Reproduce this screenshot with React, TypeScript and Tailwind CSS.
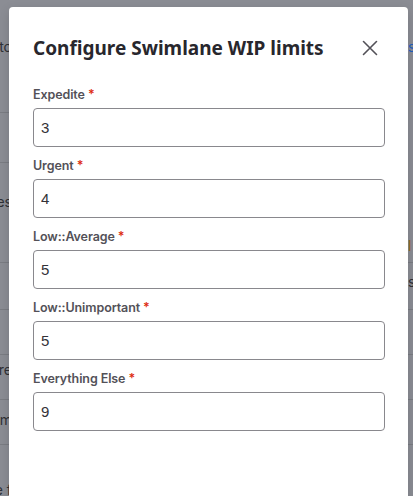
import React from "react";

const fields = [
  { label: "Expedite", value: "3" },
  { label: "Urgent", value: "4" },
  { label: "Low::Average", value: "5" },
  { label: "Low::Unimportant", value: "5" },
  { label: "Everything Else", value: "9" },
];

export default function App() {
  return (
    <div className="relative w-[413px] h-[496px] overflow-hidden bg-[#8b8d94] flex justify-between" style={{ fontFamily: "Inter, 'Noto Sans', sans-serif" }}>
      {/* background page (dimmed) */}
      <div className="w-[12px] overflow-hidden flex flex-col text-[14px] text-[#2f3036] whitespace-nowrap">
        <div className="h-[113px] border-b border-[#7a7c83] flex items-start justify-end pt-[36px]">to</div>
        <div className="h-[50px] border-b border-[#7a7c83]" />
        <div className="h-[100px] border-b border-[#7a7c83] flex items-start justify-end pt-[28px]">es</div>
        <div className="h-[47px] border-b border-[#7a7c83]" />
        <div className="h-[45px] border-b border-[#7a7c83]" />
        <div className="h-[45px] border-b border-[#7a7c83] flex items-start justify-end pt-[4px]">ere</div>
        <div className="h-[45px] border-b border-[#7a7c83] flex items-start justify-end pt-[9px]">m</div>
        <div className="flex-1 flex items-end justify-end leading-[12px]">e f</div>
      </div>
      <div className="w-[5px] overflow-hidden flex flex-col text-[14px] text-[#2f3036] whitespace-nowrap">
        <div className="h-[113px] flex items-start pt-[36px] text-[#1f5fbf]">s</div>
        <div className="h-[150px] border-b border-[#7a7c83] flex items-end pb-[6px] text-[#9a6a1a]">l</div>
        <div className="h-[47px] border-b border-[#7a7c83] flex items-start pt-[8px]">s</div>
        <div className="h-[45px] border-b border-[#7a7c83]" />
        <div className="h-[45px] border-b border-[#7a7c83]" />
        <div className="h-[45px] border-b border-[#7a7c83]" />
      </div>

      {/* modal */}
      <div className="absolute left-[9px] top-[7px] w-[399px] h-[520px] bg-white rounded-[4px] shadow-[0_4px_12px_rgba(0,0,0,0.15)] pl-[24px] pr-[23px]">
        <div className="flex items-center justify-between pt-[25px] h-[56px]">
          <h2 className="text-[19px] leading-[24px] font-bold text-[#28272d]" style={{ fontFamily: "'Noto Sans', 'Open Sans', sans-serif" }}>
            Configure Swimlane WIP limits
          </h2>
          <button className="w-[24px] h-[24px] flex items-center justify-center mr-[3px] text-[#535158]">
            <svg width="16" height="16" viewBox="0 0 16 16" fill="none" stroke="currentColor" strokeWidth="1.6" strokeLinecap="round">
              <path d="M1.5 1.5 L14.5 14.5 M14.5 1.5 L1.5 14.5" />
            </svg>
          </button>
        </div>
        <div className="flex flex-col gap-[11px] pt-[24px]">
          {fields.map((f) => (
            <div key={f.label} className="flex flex-col">
              <label className="text-[12.5px] leading-[16px] font-semibold text-[#535158] mb-[5px] tracking-[-0.1px]">
                {f.label} <span className="text-[#dd2b0e]">*</span>
              </label>
              <input
                readOnly
                value={f.value}
                className="h-[39px] w-full border border-[#89888d] rounded-[4px] px-[7px] text-[15px] text-[#333238] outline-none"
                style={{ fontFamily: "'Liberation Sans', Arial, sans-serif" }}
              />
            </div>
          ))}
        </div>
      </div>
    </div>
  );
}
